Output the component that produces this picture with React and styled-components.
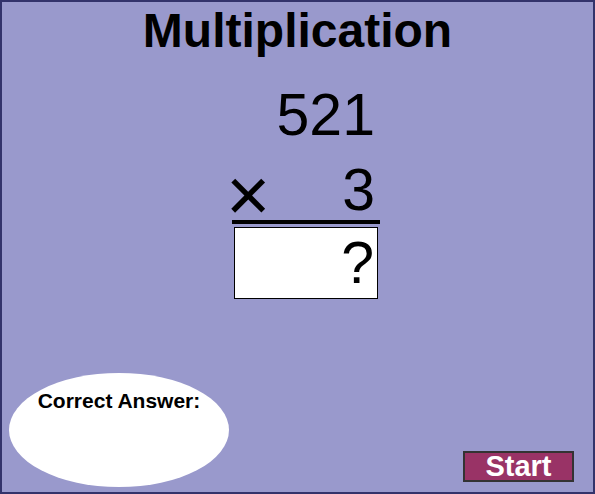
import React from 'react';
import styled, { createGlobalStyle } from 'styled-components';

const GlobalStyle = createGlobalStyle`
  html, body {
    margin: 0;
    padding: 0;
    background: #ffffff;
  }
  * {
    box-sizing: border-box;
  }
`;

const Frame = styled.div`
  width: 595px;
  height: 494px;
  display: flex;
  flex-direction: column;
  background: #9999cc;
  border: 2px solid #33336b;
  font-family: "Liberation Sans", Arial, sans-serif;
  color: #000;
`;

const Title = styled.h1`
  margin: 2px 0 0;
  font-size: 48px;
  line-height: 54px;
  font-weight: bold;
  text-align: center;
`;

const Problem = styled.div`
  width: 148px;
  margin: 27px 0 0 230px;
  display: flex;
  flex-direction: column;
`;

const NumberRow = styled.div`
  display: flex;
  justify-content: ${(p) => (p.$operator ? 'space-between' : 'flex-end')};
  align-items: flex-end;
  height: 60px;
  margin-top: ${(p) => p.$gap || 0}px;
  padding-right: 5px;
  font-size: 59px;
  line-height: 60px;
  border-bottom: ${(p) => (p.$rule ? '4px solid #000' : 'none')};
  box-sizing: content-box;
`;

const Operator = styled.span`
  margin-left: -6px;
  font-size: 76px;
  line-height: 51px;
`;

const AnswerBox = styled.div`
  height: 72px;
  margin: 3px 2px 0;
  padding: 5px 3px 0 0;
  background: #fff;
  border: 1px solid #000;
  text-align: right;
  font-size: 59px;
  line-height: 60px;
`;

const Footer = styled.div`
  margin-top: auto;
  display: flex;
  justify-content: space-between;
  align-items: flex-end;
  padding: 0 19px 5px 7px;
`;

const Bubble = styled.div`
  width: 220px;
  height: 114px;
  border-radius: 50%;
  background: #fff;
  padding-top: 16px;
  text-align: center;
  font-size: 21px;
  line-height: 23px;
  font-weight: bold;
`;

const StartButton = styled.button`
  width: 111px;
  height: 31px;
  margin-bottom: 5px;
  padding: 0;
  background: #993366;
  border: 2px solid #333333;
  color: #fff;
  font-family: "Liberation Sans", Arial, sans-serif;
  font-size: 29px;
  line-height: 27px;
  font-weight: bold;
  cursor: pointer;
`;

export default function App() {
  return (
    <>
      <GlobalStyle />
      <Frame>
        <Title>Multiplication</Title>
        <Problem>
          <NumberRow>521</NumberRow>
          <NumberRow $operator $rule $gap={15}>
            <Operator>×</Operator>
            <span>3</span>
          </NumberRow>
          <AnswerBox>?</AnswerBox>
        </Problem>
        <Footer>
          <Bubble>Correct Answer:</Bubble>
          <StartButton>Start</StartButton>
        </Footer>
      </Frame>
    </>
  );
}
